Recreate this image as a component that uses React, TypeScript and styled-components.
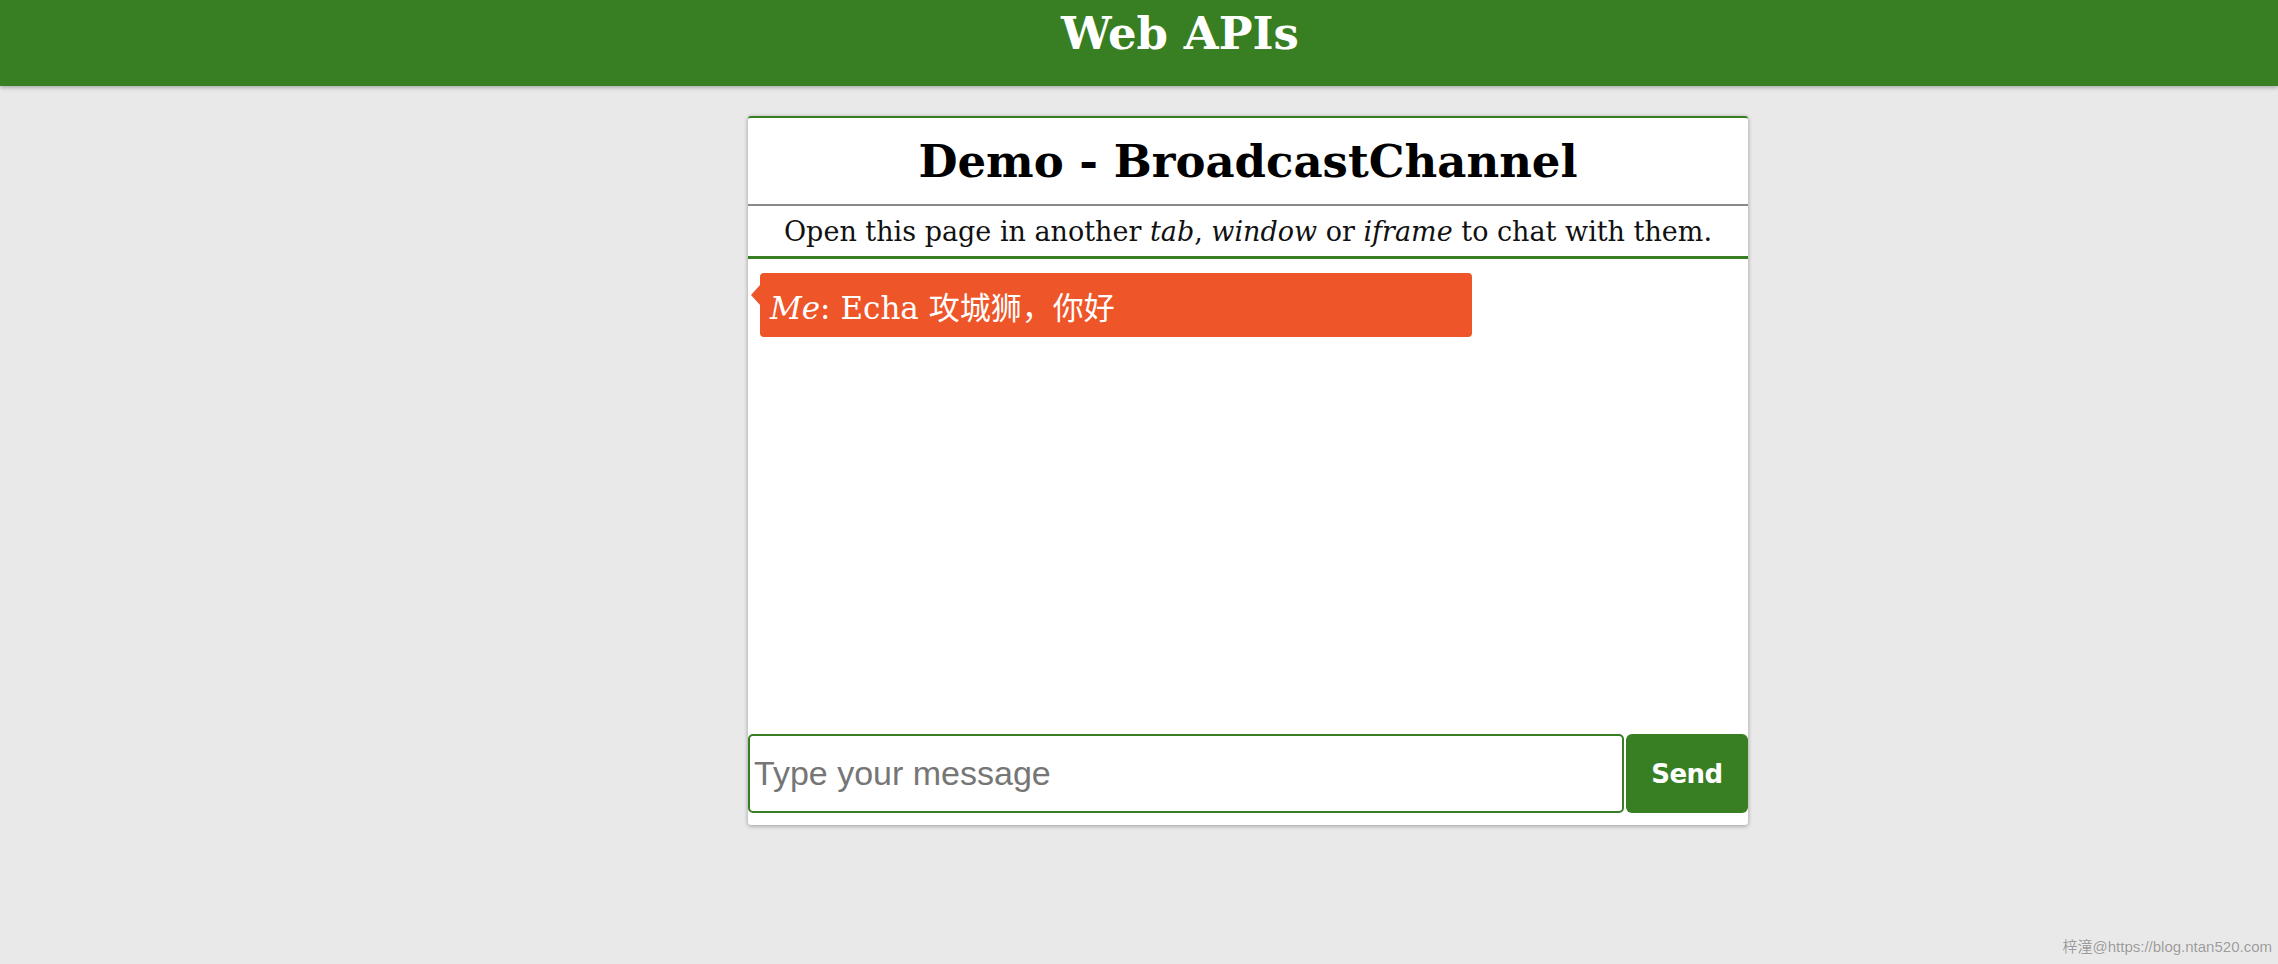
import React from "react";
import styled, { createGlobalStyle } from "styled-components";

const GlobalStyle = createGlobalStyle`
  html, body {
    margin: 0;
    padding: 0;
    background: #e9e9e9;
    font-family: "DejaVu Serif", "Noto Sans CJK SC", serif;
  }
  * {
    box-sizing: border-box;
  }
`;

const green = "#387e22";

const Page = styled.div`
  min-height: 964px;
  position: relative;
`;

const TopBar = styled.header`
  height: 86px;
  background: ${green};
  box-shadow: 0 2px 4px rgba(0, 0, 0, 0.25);
  display: flex;
  justify-content: center;
  align-items: flex-start;
  padding-left: 82px;
`;

const SiteTitle = styled.h1`
  margin: 0;
  padding-top: 4px;
  color: #fff;
  font-size: 45px;
  font-weight: 700;
  line-height: 60px;
`;

const Card = styled.main`
  width: 1000px;
  margin: 30px 0 0 748px;
  background: #fff;
  border-top: 2px solid ${green};
  border-radius: 3px;
  box-shadow: 0 1px 4px rgba(0, 0, 0, 0.35);
  padding-bottom: 12px;
  display: flex;
  flex-direction: column;
`;

const DemoTitle = styled.h2`
  margin: 0;
  height: 88px;
  display: flex;
  align-items: center;
  justify-content: center;
  font-size: 45px;
  font-weight: 700;
  color: #000;
  border-bottom: 2px solid #888;
`;

const Intro = styled.p`
  margin: 0;
  height: 53px;
  display: flex;
  align-items: center;
  justify-content: center;
  font-size: 27px;
  color: #111;
  border-bottom: 3px solid ${green};
  white-space: pre;

  em {
    font-style: italic;
  }
`;

const Messages = styled.div`
  height: 475px;
  padding: 14px 12px;
  display: flex;
  flex-direction: column;
  gap: 10px;
`;

const Bubble = styled.div<{ $color: string }>`
  position: relative;
  width: 712px;
  height: 64px;
  background: ${(p) => p.$color};
  border-radius: 4px;
  color: #fff;
  font-size: 31px;
  display: flex;
  align-items: center;
  padding-left: 10px;

  &::before {
    content: "";
    position: absolute;
    left: -9px;
    top: 12px;
    border-style: solid;
    border-width: 10px 9px 10px 0;
    border-color: transparent ${(p) => p.$color} transparent transparent;
  }

  em {
    font-style: italic;
  }
`;

const Form = styled.form`
  display: flex;
  gap: 2px;
  height: 79px;
`;

const Input = styled.input`
  flex: 1;
  height: 100%;
  border: 2px solid ${green};
  border-radius: 5px;
  padding: 0 4px;
  font-family: "Liberation Sans", Arial, sans-serif;
  font-size: 34px;
  color: #333;
  outline: none;

  &::placeholder {
    color: #767676;
  }
`;

const SendButton = styled.button`
  width: 122px;
  height: 100%;
  border: none;
  border-radius: 6px;
  background: ${green};
  color: #fff;
  font-family: "DejaVu Sans", sans-serif;
  font-weight: 900;
  font-size: 26px;
  letter-spacing: -0.5px;
  cursor: pointer;
`;

const Watermark = styled.div`
  position: absolute;
  right: 6px;
  bottom: 8px;
  color: #9a9a9a;
  font-family: "Liberation Sans", "Noto Sans CJK SC", sans-serif;
  font-size: 15px;
  text-shadow: 0 0 1px #fff;
`;

const App = () => {
  return (
    <Page>
      <GlobalStyle />
      <TopBar>
        <SiteTitle>Web APIs</SiteTitle>
      </TopBar>
      <Card>
        <DemoTitle>Demo - BroadcastChannel</DemoTitle>
        <Intro>
          Open this page in another <em>tab</em>, <em>window</em> or <em>iframe</em> to chat with them.
        </Intro>
        <Messages>
          <Bubble $color="#ee5529">
            <span>
              <em>Me</em>: Echa 攻城狮，你好
            </span>
          </Bubble>
        </Messages>
        <Form onSubmit={(e) => e.preventDefault()}>
          <Input placeholder="Type your message" />
          <SendButton type="submit">Send</SendButton>
        </Form>
      </Card>
      <Watermark>梓潼@https://blog.ntan520.com</Watermark>
    </Page>
  );
};

export default App;
